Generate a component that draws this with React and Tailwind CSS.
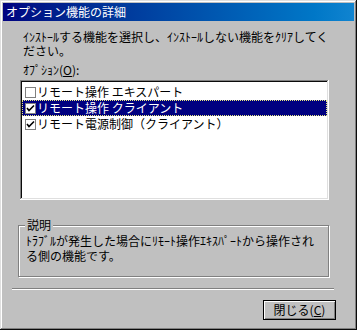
import React from "react";

const font = { fontFamily: '"Noto Sans CJK JP", "Noto Sans", sans-serif' };

const Check = ({ checked }) => (
  <div className="w-[11px] h-[11px] border border-[#808080] bg-white flex items-center justify-center shrink-0">
    {checked && (
      <svg width="9" height="9" viewBox="0 0 9 9">
        <path d="M1 4 L3 6.5 L8 1.5" stroke="#000" strokeWidth="1.6" fill="none" />
      </svg>
    )}
  </div>
);

const items = [
  { label: "リモート操作 エキスパート", checked: false, selected: false },
  { label: "リモート操作 クライアント", checked: true, selected: true },
  { label: "リモート電源制御（クライアント）", checked: true, selected: false },
];

const App = () => {
  return (
    <div
      className="w-[357px] h-[330px] bg-[#c0c0c0] p-[3px] flex flex-col text-[12px] text-black shadow-[inset_-1px_-1px_#0a0a0a,inset_1px_1px_#dfdfdf,inset_-2px_-2px_#808080,inset_2px_2px_#ffffff]"
      style={font}
    >
      {/* Title bar */}
      <div className="h-[18px] bg-gradient-to-r from-[#000080] to-[#1084d0] text-white flex items-center px-[3px] leading-[18px]">
        オプション機能の詳細
      </div>

      <div className="flex flex-col pl-[20px] pt-[9px]">
        <p className="leading-[14px]">
          ｲﾝｽﾄｰﾙする機能を選択し、ｲﾝｽﾄｰﾙしない機能をｸﾘｱしてく
          <br />
          ださい。
        </p>
        <p className="leading-[14px] mt-[5px]">
          ｵﾌﾟｼｮﾝ(<span className="underline">O</span>):
        </p>

        {/* List box */}
        <div className="mt-[3px] -ml-[3px] w-[309px] h-[120px] bg-white p-[2px] shadow-[inset_-1px_-1px_#ffffff,inset_1px_1px_#808080,inset_-2px_-2px_#dfdfdf,inset_2px_2px_#0a0a0a]">
          <div className="flex flex-col pt-[2px]">
            {items.map((it) => (
              <div
                key={it.label}
                className={
                  it.selected
                    ? "h-[16px] flex items-center gap-[1px] pl-[2px] bg-[#000080] text-white border border-dotted border-[#e8e880]"
                    : "h-[16px] flex items-center gap-[1px] pl-[2px] border border-transparent"
                }
              >
                <Check checked={it.checked} />
                <span className="leading-[14px]">{it.label}</span>
              </div>
            ))}
          </div>
        </div>

        {/* Description group */}
        <div className="relative mt-[25px] -ml-[5px] w-[311px] h-[52px] border border-[#808080] shadow-[1px_1px_0_#ffffff,inset_1px_1px_0_#ffffff]">
          <span className="absolute -top-[8px] left-[6px] bg-[#c0c0c0] px-[2px] leading-[14px]">
            説明
          </span>
          <p className="leading-[15px] pl-[7px] pt-[7px]">
            ﾄﾗﾌﾞﾙが発生した場合にﾘﾓｰﾄ操作ｴｷｽﾊﾟｰﾄから操作され
            <br />
            る側の機能です。
          </p>
        </div>
      </div>

      {/* Separator */}
      <div className="mt-[11px] ml-[9px] w-[322px] h-[2px] border-t border-[#808080] border-b border-b-white" />

      <div className="flex justify-end pr-[18px] mt-[10px]">
        <button
          className="w-[73px] h-[20px] bg-[#c0c0c0] border border-black flex items-center justify-center leading-[14px] shadow-[inset_1px_1px_#ffffff,inset_-1px_-1px_#808080]"
          style={font}
        >
          閉じる(<span className="underline">C</span>)
        </button>
      </div>
    </div>
  );
};

export default App;
